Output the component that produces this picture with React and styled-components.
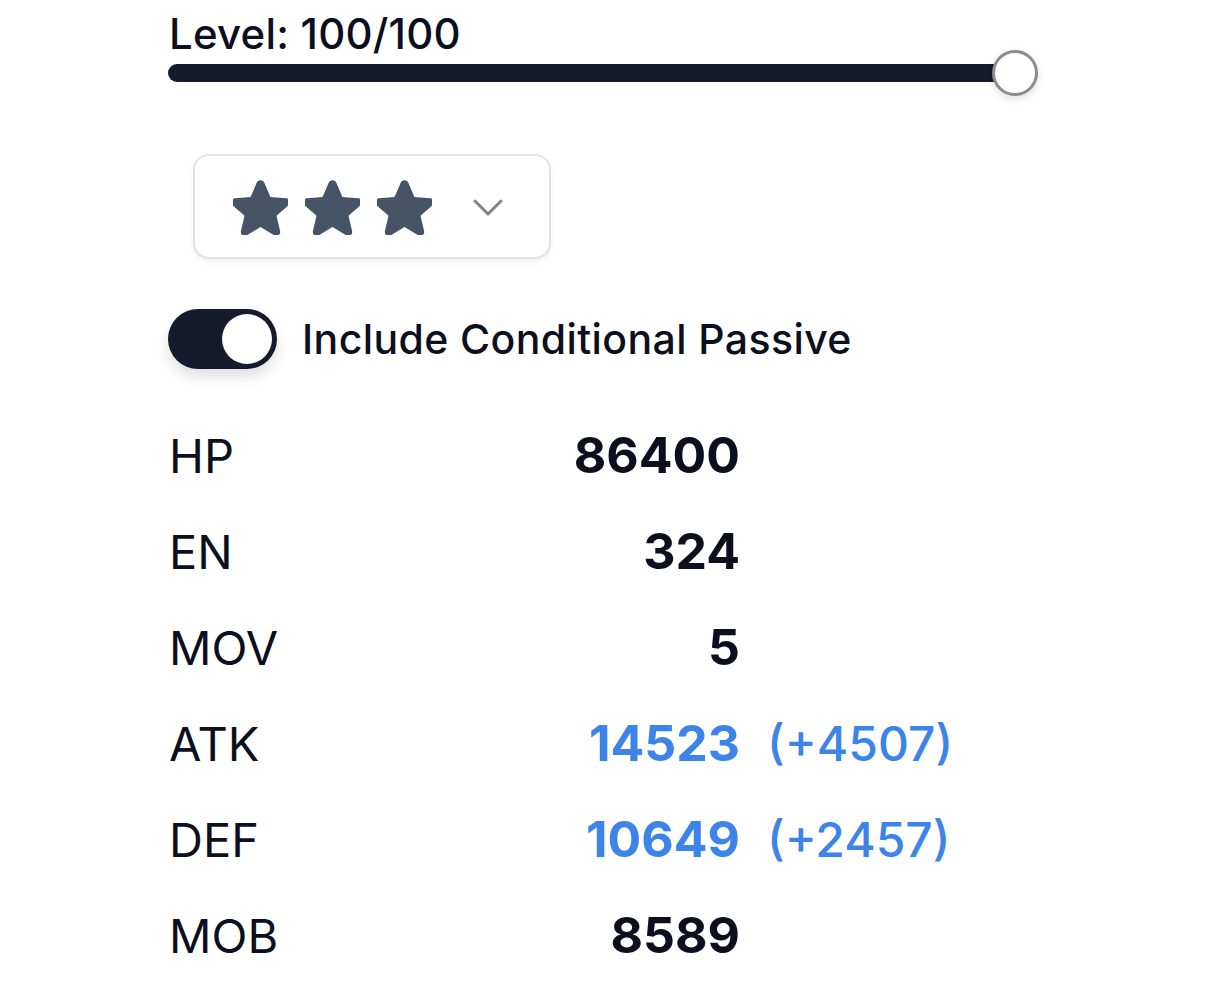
import React, { useState } from "react";
import styled, { createGlobalStyle } from "styled-components";

const Global = createGlobalStyle`
  html, body { margin: 0; padding: 0; background: #ffffff; }
  body { font-family: Inter, "Noto Sans", "Liberation Sans", sans-serif; color: #0b0f1e; }
`;

const Page = styled.div`
  padding: 10px 0 0 168px;
  width: 870px;
  display: flex;
  flex-direction: column;
`;

const LevelLabel = styled.div`
  font-size: 42px;
  font-weight: 500;
  line-height: 48px;
  padding-left: 1px;
  letter-spacing: 0.2px;
`;

const SliderRow = styled.div`
  position: relative;
  height: 46px;
  margin-top: -8px;
  display: flex;
  align-items: center;
`;

const Track = styled.div`
  flex: 1;
  height: 18px;
  border-radius: 9px;
  background: #151a2d;
  margin-right: 10px;
`;

const Thumb = styled.div`
  position: absolute;
  right: 0;
  top: 0;
  width: 46px;
  height: 46px;
  box-sizing: border-box;
  border-radius: 50%;
  background: #fff;
  border: 3px solid #8c8c8f;
  box-shadow: 0 3px 8px rgba(0, 0, 0, 0.12);
`;

const SelectBox = styled.button`
  margin: 58px 0 0 25px;
  width: 358px;
  height: 105px;
  box-sizing: border-box;
  border: 2px solid #e3e3e7;
  border-radius: 16px;
  background: #fff;
  box-shadow: 0 3px 6px rgba(0, 0, 0, 0.06);
  display: flex;
  align-items: center;
  padding: 2px 0 0 38px;
  gap: 17px;
`;

const StarIcon = styled.svg`
  width: 55px;
  height: 55px;
  flex: none;
`;

const Chevron = styled.svg`
  margin-left: 24px;
  flex: none;
`;

const ToggleRow = styled.label`
  display: flex;
  align-items: center;
  gap: 25px;
  margin-top: 50px;
`;

const Toggle = styled.div`
  width: 109px;
  height: 60px;
  border-radius: 30px;
  background: #151a2d;
  box-sizing: border-box;
  padding: 5px 5px;
  display: flex;
  justify-content: ${(p) => (p.$on ? "flex-end" : "flex-start")};
  box-shadow: 0 8px 14px rgba(0, 0, 0, 0.12);
`;

const Knob = styled.div`
  width: 50px;
  height: 50px;
  border-radius: 50%;
  background: #fff;
`;

const ToggleText = styled.span`
  font-size: 41px;
  font-weight: 500;
  letter-spacing: 0.4px;
`;

const Stats = styled.div`
  margin-top: 38px;
  display: flex;
  flex-direction: column;
`;

const StatRow = styled.div`
  display: grid;
  grid-template-columns: 200px 372px auto;
  align-items: center;
  height: 96px;
`;

const StatName = styled.span`
  font-size: 47px;
  font-weight: 400;
  padding-left: 1px;
`;

const StatValue = styled.span`
  font-size: 50px;
  font-weight: 700;
  text-align: right;
  color: ${(p) => (p.$boosted ? "#3d84ea" : "#0b0f1e")};
`;

const Bonus = styled.span`
  font-size: 48px;
  font-weight: 500;
  color: #3d84ea;
  padding-left: 27px;
`;

const Star = () => (
  <StarIcon viewBox="3.05 2.15 17.9 17.9">
    <path
      fill="#465468"
      d="M10.79 2.98c.45-1.05 1.97-1.05 2.42 0l2.02 4.73 5.130.42c1.13.09 1.6 1.5.74 2.25l-3.9 3.37 1.18 5c.26 1.11-.95 1.98-1.93 1.39L12 17.46l-4.450 2.68c-.98.59-2.19-.28-1.930-1.39l1.18-5-3.9-3.37c-.86-.75-.4-2.16.74-2.25l5.13-.42 2.02-4.73z"
    />
  </StarIcon>
);

const stats = [
  { name: "HP", value: "86400" },
  { name: "EN", value: "324" },
  { name: "MOV", value: "5" },
  { name: "ATK", value: "14523", bonus: "(+4507)" },
  { name: "DEF", value: "10649", bonus: "(+2457)" },
  { name: "MOB", value: "8589" },
];

export default function App() {
  const [on] = useState(true);
  return (
    <>
      <Global />
      <Page>
        <LevelLabel>Level: 100/100</LevelLabel>
        <SliderRow>
          <Track />
          <Thumb />
        </SliderRow>
        <SelectBox>
          <Star />
          <Star />
          <Star />
          <Chevron width="30" height="18" viewBox="0 0 30 18">
            <path d="M2 2l13 13L28 2" fill="none" stroke="#858585" strokeWidth="3" strokeLinecap="round" strokeLinejoin="round" />
          </Chevron>
        </SelectBox>
        <ToggleRow>
          <Toggle $on={on}>
            <Knob />
          </Toggle>
          <ToggleText>Include Conditional Passive</ToggleText>
        </ToggleRow>
        <Stats>
          {stats.map((s) => (
            <StatRow key={s.name}>
              <StatName>{s.name}</StatName>
              <StatValue $boosted={!!s.bonus}>{s.value}</StatValue>
              {s.bonus ? <Bonus>{s.bonus}</Bonus> : <span />}
            </StatRow>
          ))}
        </Stats>
      </Page>
    </>
  );
}
